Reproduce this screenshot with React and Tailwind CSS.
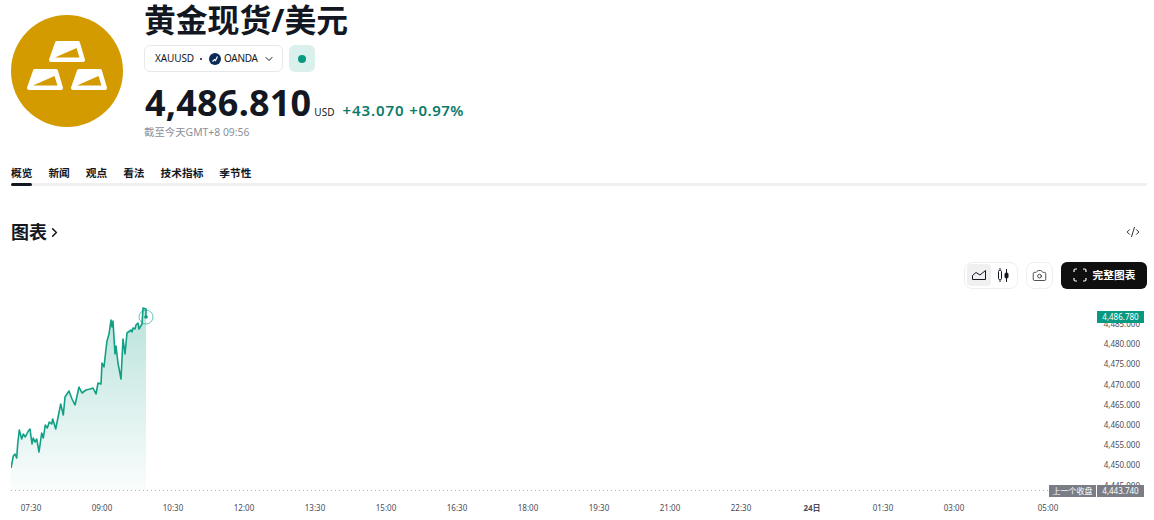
import { ChevronDown, Code2, Camera } from "lucide-react";

const tabs = ["概览", "新闻", "观点", "看法", "技术指标", "季节性"];
const priceLabels = ["4,485.000", "4,480.000", "4,475.000", "4,470.000", "4,465.000", "4,460.000", "4,455.000", "4,450.000", "4,445.000"];
const timeLabels = ["07:30", "09:00", "10:30", "12:00", "13:30", "15:00", "16:30", "18:00", "19:30", "21:00", "22:30", "24日", "01:30", "03:00"];

// points are in page coordinates, the svg viewBox starts at 11,300
const line = "11,467 13.3,455 15,453 16.7,457 17.7,443 19.3,429 21.7,438 23.3,433 25.3,436 28.3,430 30,428 32,443 33.3,437 35,441 36.7,438 39,451 41.7,432 43.3,437 45.3,424 47.3,427 49.3,421 51.7,423 52.7,418 55.7,428 58.3,415 60.7,403 63.3,414 65,396 69,390 72,398 75,404 79,386 82,392 86,389 90,388 93,387 96,393 98,382 101,383 102,362 104,366 106,348 107,340 109,333 111,319 112,326 113,320 115,353 116,345 118,362 121,378 123,338 125,353 127,332 131,329 132,331 133,327 135,328 136,324 138,322 139,328 142,323 143,307 146,308 146,316";

function GoldBar({ x, y }) {
  return (
    <g transform={`translate(${x} ${y})`}>
      <path d="M8 2 H29 L34 19 H2 Z" fill="white" stroke="white" strokeWidth="4" strokeLinejoin="round" />
      <path d="M6 16.5 L27.5 7 L30.5 16.5 Z" fill="#d49b00" />
    </g>
  );
}

function ChartTypeIcon() {
  return (
    <svg width="16" height="16" viewBox="0 0 16 16" fill="none" stroke="#131722" strokeWidth="1">
      <path d="M1.5 8.5 L5 5.5 L9 8 L14.5 3.5 V12.5 H1.5 Z" strokeLinejoin="round" />
    </svg>
  );
}

function CandleIcon() {
  return (
    <svg width="16" height="16" viewBox="0 0 16 16" fill="none" stroke="#131722" strokeWidth="1">
      <rect x="3.5" y="3.5" width="3" height="9" rx="1" />
      <path d="M5 1 V3.5 M5 12.5 V15 M11.5 2 V15" />
      <rect x="10" y="6" width="3" height="5" rx="1" fill="#131722" />
    </svg>
  );
}

function FullscreenIcon() {
  return (
    <svg width="14" height="14" viewBox="0 0 14 14" fill="none" stroke="white" strokeWidth="1.2">
      <path d="M1 4 V2.5 Q1 1 2.5 1 H4 M10 1 H11.5 Q13 1 13 2.5 V4 M13 10 V11.5 Q13 13 11.5 13 H10 M4 13 H2.5 Q1 13 1 11.5 V10" />
    </svg>
  );
}

export default function App() {
  return (
    <div className="w-[1154px] h-[520px] overflow-hidden bg-white text-[#131722] font-['Noto_Sans','Noto_Sans_CJK_SC',sans-serif]">
      <div className="flex pl-[11px] pr-[7px]">
        <div className="mt-[15px] mr-[21px] h-[112px] w-[112px] shrink-0 rounded-full bg-[#d49b00]">
          <svg width="112" height="112" viewBox="0 0 112 112">
            <GoldBar x="38" y="26" />
            <GoldBar x="16" y="54" />
            <GoldBar x="60" y="54" />
          </svg>
        </div>
        <div>
          <h1 className="h-[40px] text-[31.8px] font-bold leading-[40px]">黄金现货/美元</h1>
          <div className="mt-[5px] flex items-center gap-[6px]">
            <div className="flex h-[27px] w-[139px] items-center rounded-[6px] border border-[#e8e8e8] pl-[10px] text-[10px]">
              <span className="w-[38px] tracking-[-0.1px]">XAUUSD</span>
              <span className="mx-[7px] h-[2px] w-[2px] rounded-full bg-[#131722]" />
              <span className="mr-[3px] flex h-[12px] w-[12px] items-center justify-center rounded-full bg-[#0b2a57]">
                <svg width="8" height="8" viewBox="0 0 8 8" fill="none" stroke="white" strokeWidth="1.2">
                  <path d="M1.5 6.5 L3.5 4.5 L4.5 5.5 L6.5 1.5" />
                </svg>
              </span>
              <span className="w-[33px] tracking-[-0.3px]">OANDA</span>
              <ChevronDown className="ml-[6px] h-[12px] w-[12px]" strokeWidth={2} />
            </div>
            <div className="flex h-[27px] w-[26px] items-center justify-center rounded-[6px] bg-[#daf0ec]">
              <span className="h-[8px] w-[8px] rounded-full bg-[#089981]" />
            </div>
          </div>
          <div className="mt-[11px] flex h-[40px] items-baseline">
            <span className="pl-px text-[36px] font-bold leading-[40px] tracking-[0.2px]">4,486.810</span>
            <span className="ml-[3px] text-[10px]">USD</span>
            <span className="ml-[8px] text-[15px] font-semibold tracking-[0.9px] text-[#0c7a6b]">+43.070</span>
            <span className="ml-[5px] text-[15px] font-semibold tracking-[0.5px] text-[#0c7a6b]">+0.97%</span>
          </div>
          <div className="mt-[2px] text-[10.4px] leading-[14px] text-[#8c8f99]">截至今天GMT+8 09:56</div>
        </div>
      </div>

      <div className="ml-[11px] mr-[7px] mt-[28px] flex h-[19px] gap-[16px] border-b-[3px] border-[#f0f0f0] text-[10.7px] font-bold">
        {tabs.map((t, i) => (
          <div key={t} className="relative leading-[13px]">
            {t}
            {i === 0 && <span className="absolute left-0 right-0 top-[16px] h-[3px] rounded-full bg-[#131722]" />}
          </div>
        ))}
      </div>

      <div className="mt-[32px] flex h-[28px] items-center justify-between pl-[11px] pr-[14px]">
        <div className="flex items-center text-[18px] font-bold">
          图表
          <ChevronDown className="-rotate-90 h-[15px] w-[15px]" strokeWidth={2.5} />
        </div>
        <Code2 className="h-[14px] w-[14px]" strokeWidth={1.5} />
      </div>

      <div className="mt-[15px] flex h-[28px] items-center justify-end gap-[8px] pr-[7px]">
        <div className="flex h-[27px] items-center rounded-[8px] border border-[#efefef] p-[2px]">
          <span className="flex h-[22px] w-[24px] items-center justify-center rounded-[4px] bg-[#f0f0f0]"><ChartTypeIcon /></span>
          <span className="flex h-[22px] w-[24px] items-center justify-center"><CandleIcon /></span>
        </div>
        <div className="flex h-[27px] w-[27px] items-center justify-center rounded-[8px] border border-[#efefef]">
          <Camera className="h-[15px] w-[15px]" strokeWidth={1.2} />
        </div>
        <div className="flex h-[27px] w-[86px] items-center justify-center gap-[6px] rounded-[6px] bg-[#0f0f0f] text-[10.7px] font-bold text-white">
          <FullscreenIcon />
          完整图表
        </div>
      </div>

      <div className="relative mt-[12px] flex h-[190px] pl-[11px] pr-[7px]">
        <svg className="h-[190px] w-[1038px] shrink-0" viewBox="11 300 1038 190">
          <defs>
            <linearGradient id="area" x1="0" y1="0" x2="0" y2="1">
              <stop offset="0" stopColor="#089981" stopOpacity="0.28" />
              <stop offset="1" stopColor="#089981" stopOpacity="0.02" />
            </linearGradient>
          </defs>
          <polygon points={`${line} 146,490 11,490`} fill="url(#area)" />
          <polyline points={line} fill="none" stroke="#12a085" strokeWidth="1.6" strokeLinejoin="round" />
          <circle cx="146" cy="316" r="7" fill="none" stroke="#089981" strokeWidth="0.6" />
          <circle cx="146" cy="316" r="1.8" fill="#089981" />
          <line x1="11" y1="489.5" x2="1049" y2="489.5" stroke="#b2b5be" strokeWidth="1" strokeDasharray="1 3" />
        </svg>
        <div className="flex w-[95px] flex-col items-end pr-[4px] pt-[17px] text-[8px] leading-[12px] text-[#4a4d57]">
          {priceLabels.map((p) => (
            <div key={p} className="h-[20.2px] shrink-0">{p}</div>
          ))}
        </div>
        <div className="absolute left-[1097px] top-[10px] flex h-[12px] w-[47px] items-center justify-center bg-[#089981] text-[8px] text-white">4,486.780</div>
        <div className="absolute left-[1049px] top-[184px] flex h-[12px] w-[95px] gap-px text-[8px] text-white">
          <span className="flex w-[47px] items-center justify-center bg-[#7a7d86]">上一个收盘</span>
          <span className="flex w-[47px] items-center justify-center bg-[#7a7d86]">4,443.740</span>
        </div>
      </div>

      <div className="mt-[11px] flex gap-[31px] pl-[11px] text-[8px] leading-[12px] text-[#4a4d57]">
        {timeLabels.map((t) => (
          <span key={t} className={`w-[40px] shrink-0 text-center ${t === "24日" ? "font-bold" : ""}`}>{t}</span>
        ))}
        <span className="ml-[23px] w-[40px] shrink-0 text-center">05:00</span>
      </div>
    </div>
  );
}
